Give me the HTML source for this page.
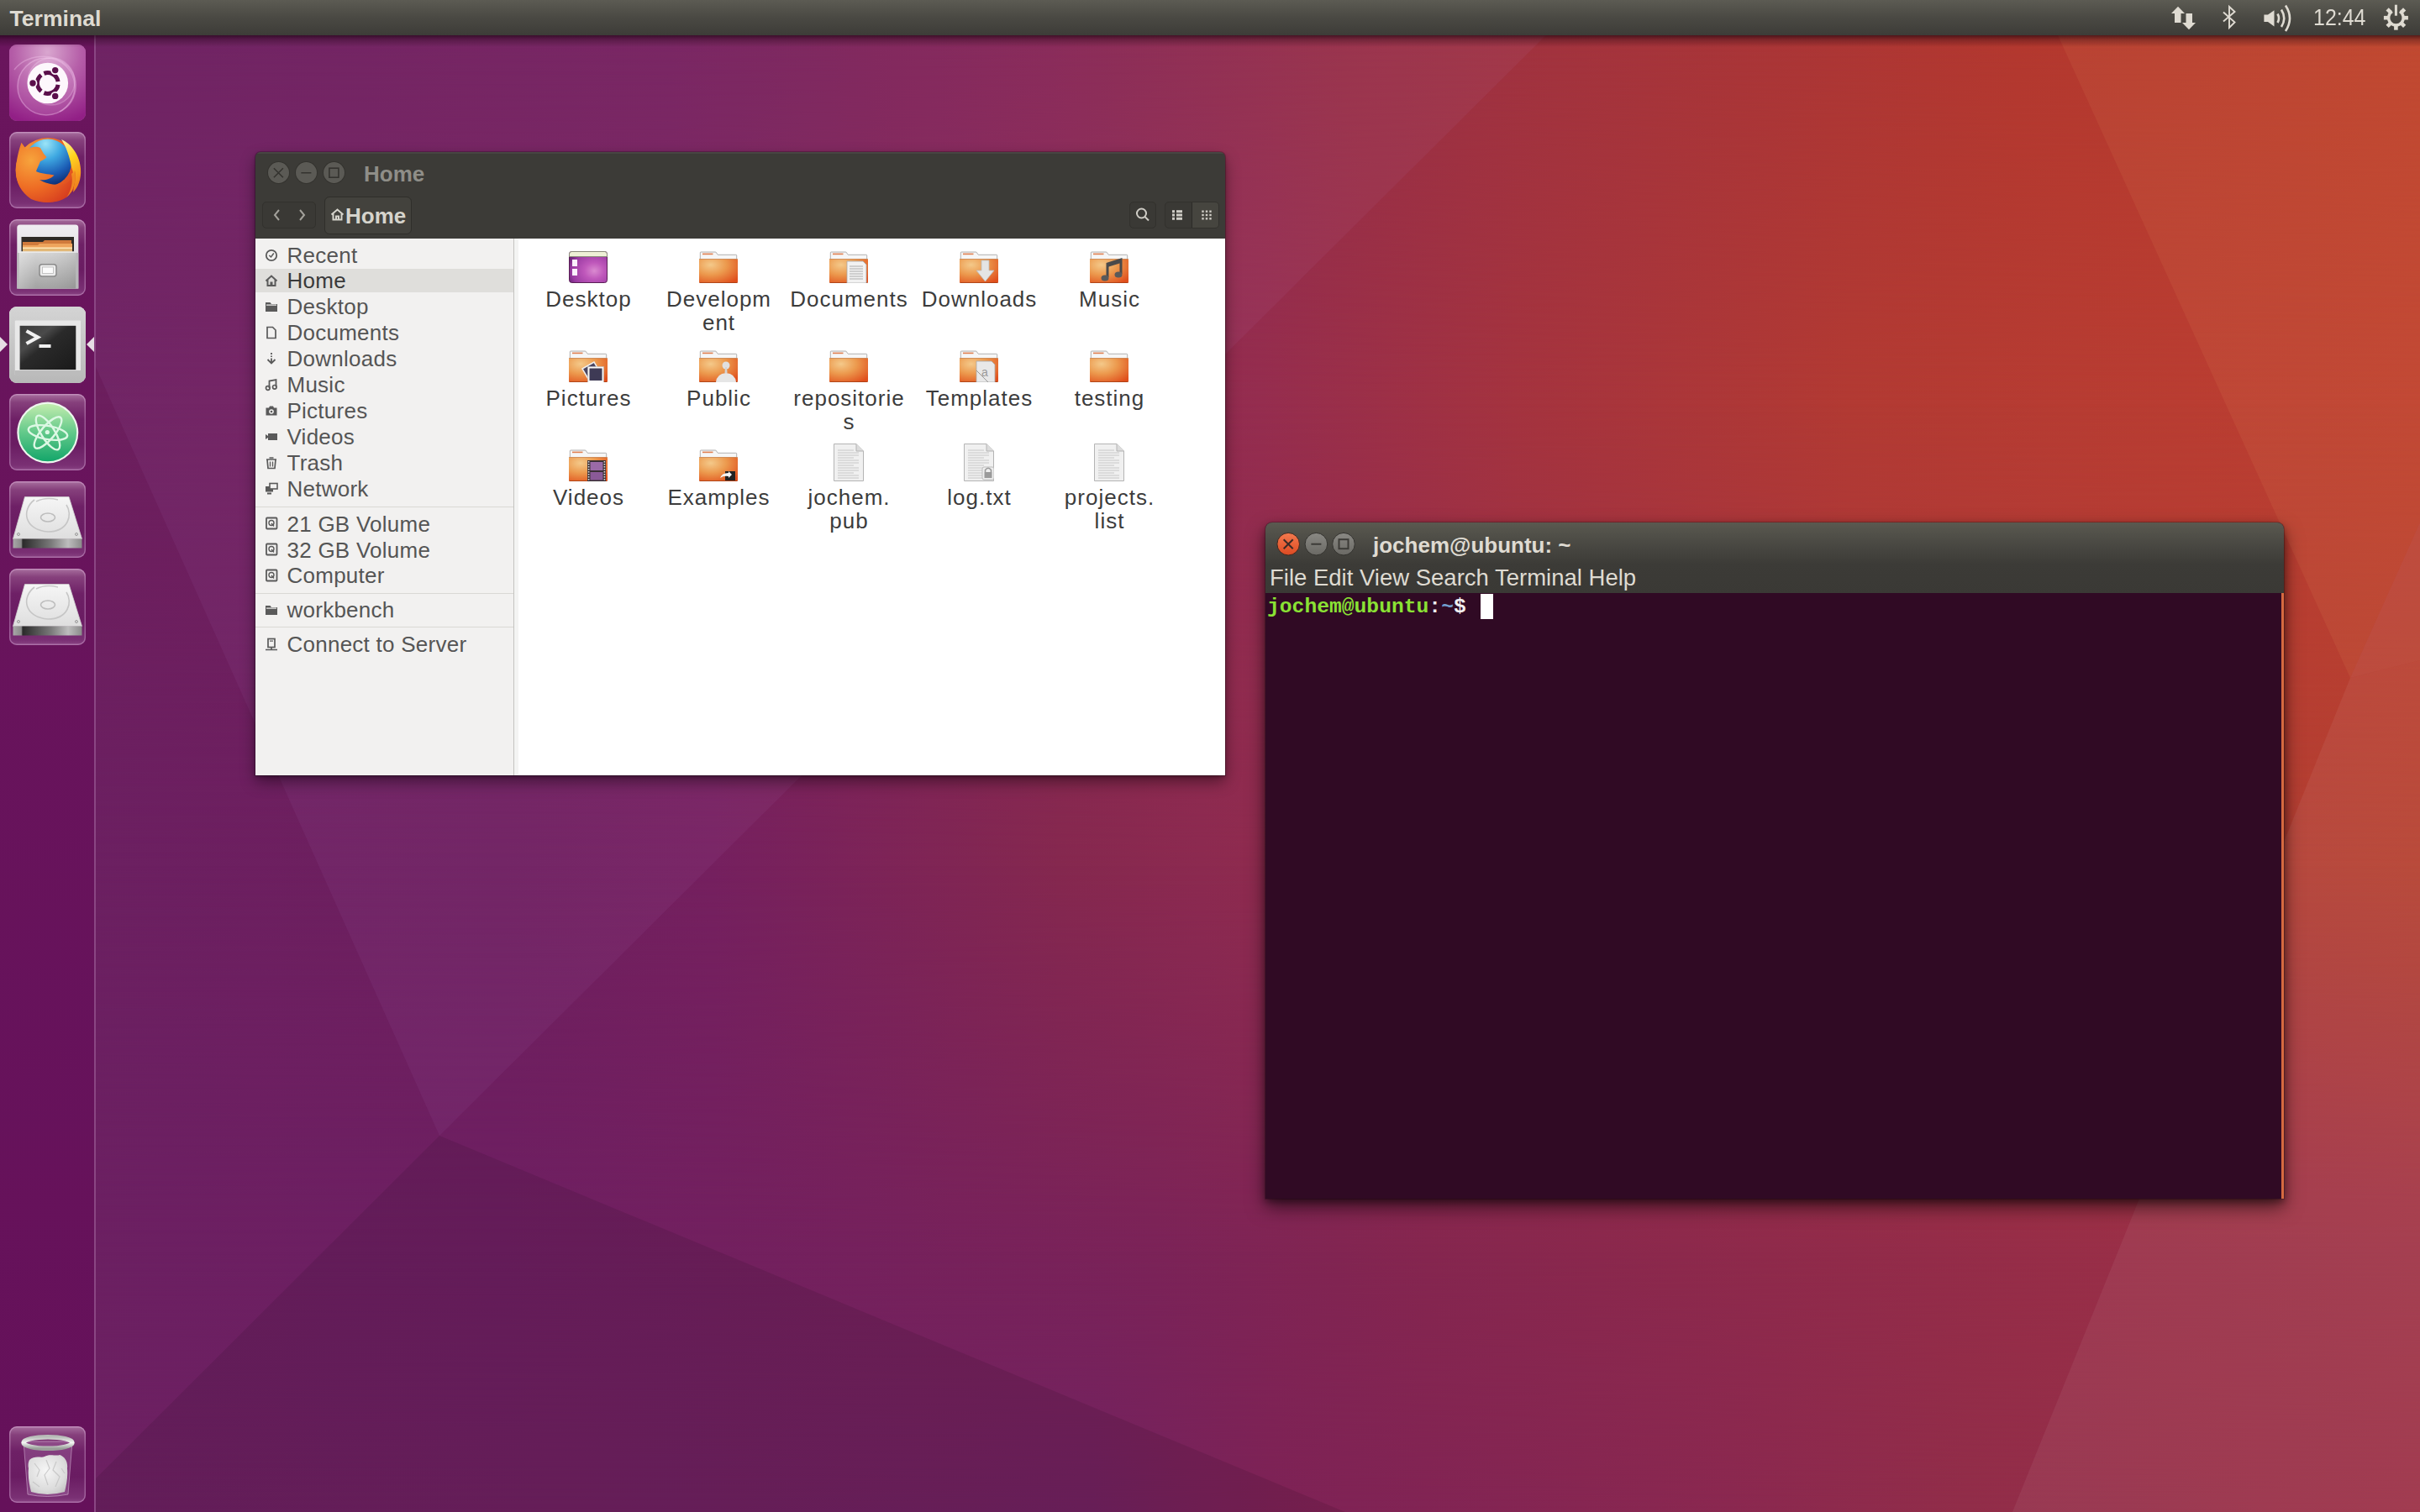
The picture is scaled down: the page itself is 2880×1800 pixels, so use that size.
<!DOCTYPE html>
<html><head><meta charset="utf-8"><style>
*{box-sizing:border-box;margin:0;padding:0}
html,body{width:2880px;height:1800px;overflow:hidden;background:#7a2360}
body{position:relative;font-family:"Liberation Sans",sans-serif}
.abs{position:absolute}
.t{position:absolute;line-height:1;white-space:pre}
#wall{position:absolute;left:0;top:0}
#panel{position:absolute;left:0;top:0;width:2880px;height:42px;background:linear-gradient(#5c5b53,#4a4943 50%,#3d3c38);z-index:10}
#panelshadow{position:absolute;left:0;top:42px;width:2880px;height:14px;background:linear-gradient(rgba(20,0,10,.62),rgba(20,0,10,.3) 35%,rgba(0,0,0,0));z-index:9}
#launcher{position:absolute;left:0;top:42px;width:114px;height:1758px;background:linear-gradient(#6a155d,#65115a);z-index:8;border-right:2px solid #8a4683}
.tile{position:absolute;left:11px;width:91px;height:91px;border-radius:9px;overflow:hidden}
.tile.gray{background:linear-gradient(#d6d6d6,#b9b9b9);box-shadow:inset 0 0 0 1.5px rgba(255,230,255,.5)}
.tile.purple{background:linear-gradient(#a8709f 0px,#86407c 10px,#6e2066 30px,#6a1c62 60px,#7a3074 85px,#8a4484);box-shadow:inset 0 0 0 1.5px rgba(255,220,255,.3)}
.tile.plain{box-shadow:inset 0 0 0 1.5px rgba(255,220,255,.35)}
.tile>svg{position:absolute;left:0;top:0}
.win{position:absolute}
</style></head>
<body>
<svg id="wall" width="2880" height="1800" viewBox="0 0 2880 1800"><defs><linearGradient id="r0" gradientUnits="userSpaceOnUse" x1="0" y1="0" x2="2880" y2="0"><stop offset="0.0000" stop-color="#681c5c"/><stop offset="0.2778" stop-color="#75205c"/><stop offset="0.4340" stop-color="#862652"/><stop offset="0.5556" stop-color="#972f45"/><stop offset="0.6424" stop-color="#a2333e"/><stop offset="0.8333" stop-color="#b3382f"/><stop offset="1.0000" stop-color="#bc3f2c"/></linearGradient><linearGradient id="r1" gradientUnits="userSpaceOnUse" x1="0" y1="0" x2="2880" y2="0"><stop offset="0.0000" stop-color="#6a1e5e"/><stop offset="0.2778" stop-color="#77215c"/><stop offset="0.5208" stop-color="#952d4f"/><stop offset="0.6250" stop-color="#a4333f"/><stop offset="0.7639" stop-color="#b23a33"/><stop offset="0.9028" stop-color="#b93d32"/><stop offset="1.0000" stop-color="#bd3f30"/></linearGradient><linearGradient id="m1" gradientUnits="userSpaceOnUse" x1="0" y1="42" x2="0" y2="480"><stop offset="0" stop-color="#fff" stop-opacity="0"/><stop offset="1" stop-color="#fff" stop-opacity="1"/></linearGradient><mask id="k1" maskUnits="userSpaceOnUse" x="0" y="0" width="2880" height="1800"><rect width="2880" height="1800" fill="url(#m1)"/></mask><linearGradient id="r2" gradientUnits="userSpaceOnUse" x1="0" y1="0" x2="2880" y2="0"><stop offset="0.0000" stop-color="#6b2062"/><stop offset="0.2083" stop-color="#6e1f5e"/><stop offset="0.2951" stop-color="#75205f"/><stop offset="0.4375" stop-color="#85284f"/><stop offset="0.4965" stop-color="#8c2a50"/><stop offset="0.6597" stop-color="#9e3146"/><stop offset="0.8333" stop-color="#ae3a3a"/><stop offset="1.0000" stop-color="#b5402f"/></linearGradient><linearGradient id="m2" gradientUnits="userSpaceOnUse" x1="0" y1="480" x2="0" y2="1030"><stop offset="0" stop-color="#fff" stop-opacity="0"/><stop offset="1" stop-color="#fff" stop-opacity="1"/></linearGradient><mask id="k2" maskUnits="userSpaceOnUse" x="0" y="0" width="2880" height="1800"><rect width="2880" height="1800" fill="url(#m2)"/></mask><linearGradient id="r3" gradientUnits="userSpaceOnUse" x1="0" y1="0" x2="2880" y2="0"><stop offset="0.0000" stop-color="#6b2062"/><stop offset="0.2083" stop-color="#6e1f62"/><stop offset="0.2951" stop-color="#72205f"/><stop offset="0.4771" stop-color="#7b2358"/><stop offset="0.5903" stop-color="#85264f"/><stop offset="0.8333" stop-color="#962d48"/><stop offset="1.0000" stop-color="#a03447"/></linearGradient><linearGradient id="m3" gradientUnits="userSpaceOnUse" x1="0" y1="1030" x2="0" y2="1490"><stop offset="0" stop-color="#fff" stop-opacity="0"/><stop offset="1" stop-color="#fff" stop-opacity="1"/></linearGradient><mask id="k3" maskUnits="userSpaceOnUse" x="0" y="0" width="2880" height="1800"><rect width="2880" height="1800" fill="url(#m3)"/></mask><linearGradient id="r4" gradientUnits="userSpaceOnUse" x1="0" y1="0" x2="2880" y2="0"><stop offset="0.0000" stop-color="#6c2062"/><stop offset="0.4514" stop-color="#722260"/><stop offset="0.5253" stop-color="#7d2256"/><stop offset="0.7153" stop-color="#8a2850"/><stop offset="0.8125" stop-color="#912d49"/><stop offset="1.0000" stop-color="#9c3047"/></linearGradient><linearGradient id="m4" gradientUnits="userSpaceOnUse" x1="0" y1="1490" x2="0" y2="1800"><stop offset="0" stop-color="#fff" stop-opacity="0"/><stop offset="1" stop-color="#fff" stop-opacity="1"/></linearGradient><mask id="k4" maskUnits="userSpaceOnUse" x="0" y="0" width="2880" height="1800"><rect width="2880" height="1800" fill="url(#m4)"/></mask></defs><rect width="2880" height="1800" fill="url(#r0)"/><rect width="2880" height="1800" fill="url(#r1)" mask="url(#k1)"/><rect width="2880" height="1800" fill="url(#r2)" mask="url(#k2)"/><rect width="2880" height="1800" fill="url(#r3)" mask="url(#k3)"/><rect width="2880" height="1800" fill="url(#r4)" mask="url(#k4)"/><polygon points="0,0 1882,0 523,1352 0,182" fill="#d2a0e6" fill-opacity="0.06"/><polygon points="523,1352 74,1800 1601,1800" fill="#000" fill-opacity="0.09"/><polygon points="2430,0 2880,0 2880,622 2797,807" fill="#ffc078" fill-opacity="0.08"/><polygon points="2797,807 2880,622 2880,786" fill="#fff" fill-opacity="0.07"/><polygon points="2797,807 2880,786 2880,1800 2395,1800" fill="#fff" fill-opacity="0.06"/></svg>
<div id="panel"><div class="t" style="left:11.5px;top:8.5px;font-size:26.6px;color:#dfdbd2;font-weight:bold;font-family:'Liberation Sans',sans-serif;">Terminal</div><div class="t" style="left:2752.5px;top:8.1px;font-size:27px;color:#dfdbd2;font-weight:normal;font-family:'Liberation Sans',sans-serif;transform:scaleX(0.925);transform-origin:0 0">12:44</div><svg class="abs" style="left:2580px;top:4px" width="300" height="36">
<g fill="#dfdbd2">
<path d="M12 3.7 L4 12 H8 V23 H15.5 V12 H20 Z"/>
<path d="M25 31.2 L33 23 H29 V12 H21.5 V23 H17 Z"/>
</g>
<path d="M66 10.5 L79.5 22.5 L73 29 V4 L79.5 10 L66 21.5" fill="none" stroke="#dfdbd2" stroke-width="1.9" stroke-linejoin="miter"/>
<path d="M114.4 13.5 H119 L126.5 8.2 V27.4 L119 22 H114.4 Z" fill="#dfdbd2"/>
<path d="M130.5 12.5 Q133.5 17.8 130.5 23" fill="none" stroke="#dfdbd2" stroke-width="2.6"/>
<path d="M135 7.5 Q141.5 17.8 135 28" fill="none" stroke="#dfdbd2" stroke-width="2.6"/>
<path d="M140 2.5 Q150 17.8 140 33" fill="none" stroke="#dfdbd2" stroke-width="2.6"/>
<g transform="translate(271.4 17.2)" fill="#dfdbd2">
<path d="M-4.5 -7.6 A 8.8 8.8 0 1 0 4.5 -7.6" fill="none" stroke="#dfdbd2" stroke-width="3.4"/>
<rect x="-2.3" y="-14.5" width="4.6" height="5" transform="rotate(45)"/><rect x="-2.3" y="-14.5" width="4.6" height="5" transform="rotate(90)"/><rect x="-2.3" y="-14.5" width="4.6" height="5" transform="rotate(135)"/><rect x="-2.3" y="-14.5" width="4.6" height="5" transform="rotate(180)"/><rect x="-2.3" y="-14.5" width="4.6" height="5" transform="rotate(225)"/><rect x="-2.3" y="-14.5" width="4.6" height="5" transform="rotate(270)"/><rect x="-2.3" y="-14.5" width="4.6" height="5" transform="rotate(315)"/>
<rect x="-1.5" y="-15.5" width="3" height="13"/>
</g>
</svg></div>
<div id="panelshadow"></div>
<div id="launcher">
<div class="tile plain" style="top:11px;"><svg width="91" height="91" viewBox="0 0 91 91">
<defs><radialGradient id="ubg" cx="0.5" cy="0.1" r="0.95"><stop offset="0" stop-color="#d9a6cf"/><stop offset="0.45" stop-color="#b660a9"/><stop offset="1" stop-color="#921f86"/></radialGradient></defs>
<rect width="91" height="91" fill="url(#ubg)"/>
<circle cx="44" cy="50" r="34" fill="rgba(255,220,250,.12)" stroke="rgba(255,215,250,.35)" stroke-width="1.6"/><circle cx="50" cy="44" r="28" fill="rgba(255,230,255,.10)" stroke="rgba(255,225,250,.25)" stroke-width="1.4"/>
<path d="M6 30 C 20 12 52 8 70 26 C 86 44 80 70 60 80" fill="none" stroke="rgba(255,215,250,.3)" stroke-width="1.6"/>
<circle cx="45.8" cy="46" r="24.3" fill="#fdf7fc"/>
<g fill="none" stroke="#5b0f4b" stroke-width="5"><path d="M58.05 47.94 A12.4 12.4 0 0 1 41.36 57.58"/><path d="M38.00 55.64 A12.4 12.4 0 0 1 38.00 36.36"/><path d="M41.36 34.42 A12.4 12.4 0 0 1 58.05 44.06"/></g>
<g fill="#fdf7fc"><circle cx="54.70" cy="61.42" r="5.4"/><circle cx="28.00" cy="46.00" r="5.4"/><circle cx="54.70" cy="30.58" r="5.4"/></g><g fill="#5b0f4b"><circle cx="54.70" cy="61.42" r="3.7"/><circle cx="28.00" cy="46.00" r="3.7"/><circle cx="54.70" cy="30.58" r="3.7"/></g>
</svg></div>
<div class="tile purple" style="top:115px;"><svg width="91" height="91" viewBox="0 0 91 91">
<defs>
<radialGradient id="ffg" cx="0.45" cy="0.1" r="0.95"><stop offset="0" stop-color="#9be4f7"/><stop offset="0.35" stop-color="#3fa9e2"/><stop offset="0.7" stop-color="#1b5cb4"/><stop offset="1" stop-color="#0b2466"/></radialGradient>
<radialGradient id="ffo" cx="0.25" cy="0.3" r="0.85"><stop offset="0" stop-color="#f7a43c"/><stop offset="0.55" stop-color="#ee6c24"/><stop offset="1" stop-color="#d63d1f"/></radialGradient>
<linearGradient id="ffy" x1="0" y1="0" x2="0.3" y2="1"><stop offset="0" stop-color="#fff6b0"/><stop offset="0.45" stop-color="#ffd51f"/><stop offset="1" stop-color="#f2861e"/></linearGradient>
</defs>
<circle cx="46" cy="45.5" r="38.5" fill="url(#ffo)"/><circle cx="46" cy="36.5" r="28" fill="url(#ffg)"/>
<path d="M62 9 C 74 14 84 28 85 44 C 86 56 82 66 76 72 C 78 62 78 52 74 42 C 72 30 68 18 62 9 Z" fill="url(#ffy)"/>
<path d="M14.5 12.7 C 17 16 19 19 21 21 C 27 17 33 17 37 19 L 41 26 L 44.5 30 C 42 33 39 34 37 35 C 35 40 33 44 32 47 C 38 50 46 50 53.5 51.5 C 50 56 42 58 36 57 C 44 62 56 64 66 62 C 72 60 76 54 78 46 C 80 56 78 70 68 78 C 58 85 40 86 26 80 C 14 72 8 60 8 48 C 8 32 12 20 14.5 12.7 Z" fill="url(#ffo)"/>
<path d="M78 46 C 80 56 78 70 68 78 C 74 70 76 60 74 50 Z" fill="#f59a22" opacity=".8"/>
</svg></div>
<div class="tile purple" style="top:219px;"><svg width="91" height="91" viewBox="0 0 91 91">
<defs>
<linearGradient id="fcab" x1="0" y1="0" x2="0" y2="1"><stop offset="0" stop-color="#f0eef2"/><stop offset="1" stop-color="#cfcfd3"/></linearGradient>
<linearGradient id="fdr" x1="0" y1="0" x2="0" y2="1"><stop offset="0" stop-color="#d6d6d6"/><stop offset="1" stop-color="#a2a2a2"/></linearGradient>
<linearGradient id="fdrh" x1="0" y1="0" x2="1" y2="0"><stop offset="0" stop-color="#fff" stop-opacity=".25"/><stop offset=".3" stop-color="#fff" stop-opacity="0"/><stop offset="1" stop-color="#000" stop-opacity=".08"/></linearGradient>
</defs>
<path d="M9.3 82.6 V10 Q9.3 6.5 12.8 6.5 H78.8 Q82.3 6.5 82.3 10 V82.6 Z" fill="url(#fcab)"/>
<rect x="9.3" y="40" width="73" height="42.6" fill="#b9b9bb"/>
<rect x="14.5" y="21" width="62.5" height="18" fill="#2e2a26"/>
<path d="M16 39 V27 H40 L42 25 H74 V39 Z" fill="#d07a3c"/>
<path d="M16 39 V31 H34 L36 29 H75 V39 Z" fill="#eea45c"/>
<rect x="16" y="33.5" width="59" height="1.5" fill="#ffe8b8"/>
<rect x="16" y="35" width="59" height="4" fill="#e2b878"/>
<rect x="11.7" y="38.5" width="67.5" height="44.1" rx="1" fill="url(#fdr)"/>
<rect x="11.7" y="38.5" width="67.5" height="44.1" rx="1" fill="url(#fdrh)"/>
<rect x="11.7" y="38.5" width="67.5" height="1.2" fill="#f2f2f2"/>
<rect x="36" y="53.7" width="20" height="14.3" rx="3" fill="#ececec" stroke="#8a8a8a" stroke-width="1.5"/>
<rect x="39.5" y="57" width="13" height="7.5" fill="#fbfbfb" stroke="#b8b8b8" stroke-width=".8"/>
</svg></div>
<div class="tile gray" style="top:323px;"><svg width="91" height="91" viewBox="0 0 91 91">
<defs><linearGradient id="tscr" x1="0" y1="0" x2="1" y2="1"><stop offset="0" stop-color="#3a3a3a"/><stop offset="0.3" stop-color="#4a4a4a"/><stop offset="0.45" stop-color="#2a2a2a"/><stop offset="1" stop-color="#1a1a1a"/></linearGradient>
<linearGradient id="tbg" x1="0" y1="0" x2="0" y2="1"><stop offset="0" stop-color="#d4d4d4"/><stop offset="1" stop-color="#b8b8b8"/></linearGradient></defs>
<rect x="0" y="0" width="91" height="91" fill="url(#tbg)"/>
<rect x="6.8" y="16.5" width="78.2" height="65.5" rx="1" fill="#e8e8e8"/>
<rect x="6.8" y="76" width="78.2" height="6" fill="#bcbcbc"/>
<rect x="12.6" y="22.8" width="66.7" height="52.3" fill="url(#tscr)"/>
<path d="M20.5 29 L34 36.5 L20.5 44" fill="none" stroke="#f0f0f0" stroke-width="4.2"/>
<rect x="35.5" y="45" width="14" height="4" fill="#f0f0f0"/>
</svg></div>
<div class="tile purple" style="top:427px;"><svg width="91" height="91" viewBox="0 0 91 91">
<defs><linearGradient id="atg" x1="0" y1="0" x2="0" y2="1"><stop offset="0" stop-color="#c2ecae"/><stop offset="0.5" stop-color="#62c98a"/><stop offset="1" stop-color="#14a66a"/></linearGradient></defs>
<circle cx="45.8" cy="46" r="36.5" fill="#eef6ee"/>
<circle cx="45.8" cy="46" r="34.3" fill="url(#atg)"/>
<g fill="none" stroke="#dcf8e4" stroke-width="2.4">
<ellipse cx="46" cy="46" rx="23.5" ry="8" transform="rotate(10 46 46)"/>
<ellipse cx="46" cy="46" rx="23.5" ry="8" transform="rotate(58 46 46)"/>
<ellipse cx="46" cy="46" rx="23.5" ry="8" transform="rotate(-50 46 46)"/>
</g>
<circle cx="45.3" cy="45.5" r="2.6" fill="#dcf8e4"/>
</svg></div>
<div class="tile purple" style="top:531px;"><svg width="91" height="91" viewBox="0 0 91 91">
<defs><linearGradient id="dtop" x1="0" y1="0" x2="0" y2="1"><stop offset="0" stop-color="#f6f6f6"/><stop offset="1" stop-color="#dedede"/></linearGradient>
<linearGradient id="dside" x1="0" y1="0" x2="1" y2="0"><stop offset="0" stop-color="#a8a8a8"/><stop offset="0.12" stop-color="#8a8a8a"/><stop offset="0.14" stop-color="#2a2a2a"/><stop offset="0.55" stop-color="#7a7a7a"/><stop offset="0.8" stop-color="#bdbdbd"/><stop offset="1" stop-color="#8a8a8a"/></linearGradient></defs>
<path d="M18.5 18.5 L71 18.5 L86.5 68.5 L4.5 68.5 Z" fill="url(#dtop)" stroke="#cfcfcf" stroke-width=".8"/>
<rect x="4.5" y="68.5" width="82" height="11" fill="url(#dside)"/>
<path d="M30 22 C 14 34 18 58 46 60 C 70 60 76 40 68 28" fill="none" stroke="#c6c6c6" stroke-width="1.6"/>
<path d="M32 24 C 40 20 50 20 58 22" fill="none" stroke="#cacaca" stroke-width="1.4"/>
<ellipse cx="46" cy="43" rx="8.5" ry="5" fill="none" stroke="#bdbdbd" stroke-width="1.6"/>
<circle cx="11" cy="63" r="1.5" fill="none" stroke="#888" stroke-width=".8"/><circle cx="80" cy="63" r="1.5" fill="none" stroke="#888" stroke-width=".8"/>
</svg></div>
<div class="tile purple" style="top:635px;"><svg width="91" height="91" viewBox="0 0 91 91">
<defs><linearGradient id="dtop" x1="0" y1="0" x2="0" y2="1"><stop offset="0" stop-color="#f6f6f6"/><stop offset="1" stop-color="#dedede"/></linearGradient>
<linearGradient id="dside" x1="0" y1="0" x2="1" y2="0"><stop offset="0" stop-color="#a8a8a8"/><stop offset="0.12" stop-color="#8a8a8a"/><stop offset="0.14" stop-color="#2a2a2a"/><stop offset="0.55" stop-color="#7a7a7a"/><stop offset="0.8" stop-color="#bdbdbd"/><stop offset="1" stop-color="#8a8a8a"/></linearGradient></defs>
<path d="M18.5 18.5 L71 18.5 L86.5 68.5 L4.5 68.5 Z" fill="url(#dtop)" stroke="#cfcfcf" stroke-width=".8"/>
<rect x="4.5" y="68.5" width="82" height="11" fill="url(#dside)"/>
<path d="M30 22 C 14 34 18 58 46 60 C 70 60 76 40 68 28" fill="none" stroke="#c6c6c6" stroke-width="1.6"/>
<path d="M32 24 C 40 20 50 20 58 22" fill="none" stroke="#cacaca" stroke-width="1.4"/>
<ellipse cx="46" cy="43" rx="8.5" ry="5" fill="none" stroke="#bdbdbd" stroke-width="1.6"/>
<circle cx="11" cy="63" r="1.5" fill="none" stroke="#888" stroke-width=".8"/><circle cx="80" cy="63" r="1.5" fill="none" stroke="#888" stroke-width=".8"/>
</svg></div>
<div class="tile purple" style="top:1656px;"><svg width="91" height="91" viewBox="0 0 91 91">
<defs><linearGradient id="trim" x1="0" y1="0" x2="0" y2="1"><stop offset="0" stop-color="#b8bcb8"/><stop offset="0.5" stop-color="#f4f6f4"/><stop offset="1" stop-color="#9aa09a"/></linearGradient>
<radialGradient id="tpap" cx="0.45" cy="0.4" r="0.7"><stop offset="0" stop-color="#f6f6f6"/><stop offset="0.7" stop-color="#dcdcdc"/><stop offset="1" stop-color="#c4c4c4"/></radialGradient></defs>
<path d="M17 18 L75 18 L70 81 Q45 86 22 81 Z" fill="rgba(200,150,205,.25)" stroke="rgba(235,210,235,.45)" stroke-width="1"/>
<path d="M24 40 C 30 34 38 38 42 36 C 48 32 56 36 60 34 C 66 36 70 42 69 50 C 70 60 68 70 66 78 Q 45 84 26 78 C 24 70 22 60 23 50 C 22 46 23 42 24 40 Z" fill="url(#tpap)"/>
<g fill="none" stroke="#c2c2c2" stroke-width="1.2" opacity=".8">
<path d="M30 44 L36 52 L33 60 M44 40 L48 50 L42 58 L46 70 M56 42 L52 52 L60 60 L55 72 M28 66 L36 72 M62 50 L66 56"/>
</g>
<ellipse cx="46" cy="19.5" rx="29" ry="6.8" fill="none" stroke="url(#trim)" stroke-width="5.5"/>
</svg></div>
<div class="abs" style="left:0;top:359px;width:0;height:0;border-top:9px solid transparent;border-bottom:9px solid transparent;border-left:9px solid #e6dde4"></div>
<div class="abs" style="left:103px;top:359px;width:0;height:0;border-top:9px solid transparent;border-bottom:9px solid transparent;border-right:9px solid #e6dde4"></div>
</div>
<div class="win" id="naut" style="left:304px;top:181px;width:1154px;height:742px;border-radius:6px 6px 0 0;background:#3c3b37;box-shadow:0 8px 18px rgba(0,0,0,.42),0 2px 4px rgba(0,0,0,.25),0 0 0 1px rgba(0,0,0,.2);overflow:hidden;z-index:5"><div class="abs" style="left:0;top:0;width:100%;height:2px;background:rgba(255,255,255,.06)"></div><div class="abs" style="left:14.899999999999977px;top:12.199999999999989px;width:25px;height:25px;border-radius:50%;background:#5b5a55;box-shadow:0 0 0 1px #34332f"></div><div class="abs" style="left:47.89999999999998px;top:12.199999999999989px;width:25px;height:25px;border-radius:50%;background:#5b5a55;box-shadow:0 0 0 1px #34332f"></div><div class="abs" style="left:80.89999999999998px;top:12.199999999999989px;width:25px;height:25px;border-radius:50%;background:#5b5a55;box-shadow:0 0 0 1px #34332f"></div><svg class="abs" style="left:0;top:0" width="1154" height="110">
<g stroke="#34332f" stroke-width="1.6" fill="none">
<path d="M21.899999999999977 19.19999999999999 l11 11 M32.89999999999998 19.19999999999999 l-11 11"/>
<path d="M54.39999999999998 24.69999999999999 h12"/>
<rect x="87.89999999999998" y="19.19999999999999" width="11" height="11"/>
</g></svg><div class="t" style="left:129px;top:13.0px;font-size:26px;color:#8f8e88;font-weight:bold;font-family:'Liberation Sans',sans-serif;">Home</div><div class="abs" style="left:8px;top:59px;width:64px;height:32px;border-radius:5px;border:1px solid #32312d;background:#3a3935"></div><svg class="abs" style="left:0;top:0" width="1154" height="110"><g stroke="#a3a19b" stroke-width="2" fill="none">
<path d="M28 69 l-5 6 l5 6"/><path d="M53 69 l5 6 l-5 6"/></g></svg><div class="abs" style="left:82px;top:53px;width:104px;height:45px;border-radius:6px;border:1px solid #2f2e2a;background:#43423d"></div><svg class="abs" style="left:89px;top:67px" width="17" height="15"><path d="M1.5 7.5 L8.5 1.5 L15.5 7.5 M3.5 6 V13.5 H13.5 V6 M7 13.5 V9.5 H10 V13.5" fill="none" stroke="#d6d4cc" stroke-width="2"/></svg><div class="t" style="left:107px;top:63.0px;font-size:26px;color:#d6d4cc;font-weight:bold;font-family:'Liberation Sans',sans-serif;">Home</div><div class="abs" style="left:1040px;top:59px;width:32px;height:32px;border-radius:5px;border:1px solid #32312d;background:#3a3935"></div><div class="abs" style="left:1082px;top:59px;width:65px;height:32px;border-radius:5px;border:1px solid #32312d;background:#3a3935;overflow:hidden"><div class="abs" style="left:31px;top:0;width:34px;height:32px;background:#46453f;border-left:1px solid #2c2b28"></div></div><svg class="abs" style="left:0;top:0" width="1154" height="110"><g fill="none" stroke="#cfcdc6" stroke-width="2">
<circle cx="1054.5" cy="73" r="5.5"/><path d="M1058.5 77 l4.5 4.5"/></g>
<g fill="#cfcdc6"><rect x="1091" y="69.19999999999999" width="3" height="3"/><rect x="1096" y="69.19999999999999" width="7" height="3"/><rect x="1091" y="73.5" width="3" height="3"/><rect x="1096" y="73.5" width="7" height="3"/><rect x="1091" y="77.80000000000001" width="3" height="3"/><rect x="1096" y="77.80000000000001" width="7" height="3"/><rect x="1126.3" y="69.5" width="2.4" height="2.4"/><rect x="1126.3" y="73.80000000000001" width="2.4" height="2.4"/><rect x="1126.3" y="78.10000000000002" width="2.4" height="2.4"/><rect x="1130.8" y="69.5" width="2.4" height="2.4"/><rect x="1130.8" y="73.80000000000001" width="2.4" height="2.4"/><rect x="1130.8" y="78.10000000000002" width="2.4" height="2.4"/><rect x="1135.3" y="69.5" width="2.4" height="2.4"/><rect x="1135.3" y="73.80000000000001" width="2.4" height="2.4"/><rect x="1135.3" y="78.10000000000002" width="2.4" height="2.4"/></g></svg><div class="abs" style="left:0;top:103px;width:307px;height:639px;background:#f2f1f0"></div><div class="abs" style="left:307px;top:103px;width:1px;height:639px;background:#c4c3c0"></div><div class="abs" style="left:308px;top:103px;width:846px;height:639px;background:#ffffff"></div><div class="abs" style="left:308px;top:103px;width:5px;height:639px;background:#f4f4f3"></div><div class="abs" style="left:0;top:139px;width:307px;height:28px;background:#dfdedb"></div><div class="abs" style="left:0;top:422px;width:307px;height:1px;background:#d9d8d5"></div><div class="abs" style="left:0;top:525px;width:307px;height:1px;background:#d9d8d5"></div><div class="abs" style="left:0;top:565px;width:307px;height:1px;background:#d9d8d5"></div><svg class="abs" style="left:11px;top:114.5px" width="16" height="16" viewBox="0 0 16 16"><circle cx="8" cy="8" r="6.2" fill="none" stroke="#5a5a5a" stroke-width="1.8"/><path d="M5.3 8 L7.5 10 L10.8 5.5" fill="none" stroke="#5a5a5a" stroke-width="1.5"/></svg><div class="t" style="left:37.5px;top:110.0px;font-size:26px;color:#555555;font-weight:normal;font-family:'Liberation Sans',sans-serif;letter-spacing:0.25px">Recent</div><svg class="abs" style="left:11px;top:144.5px" width="16" height="16" viewBox="0 0 16 16"><path d="M1.5 8.5 L8 2.5 L14.5 8.5 M3.5 7 V14 H12.5 V7" fill="none" stroke="#5a5a5a" stroke-width="2"/><rect x="6.5" y="9.5" width="3" height="4.5" fill="#5a5a5a"/></svg><div class="t" style="left:37.5px;top:140.0px;font-size:26px;color:#3a3a3a;font-weight:normal;font-family:'Liberation Sans',sans-serif;letter-spacing:0.25px">Home</div><svg class="abs" style="left:11px;top:175.5px" width="16" height="16" viewBox="0 0 16 16"><path d="M1 3 H6.5 L8 5 H15 V14 H1 Z" fill="#5a5a5a"/><rect x="2" y="5.5" width="12" height="1.2" fill="#f2f1f0"/></svg><div class="t" style="left:37.5px;top:171.0px;font-size:26px;color:#555555;font-weight:normal;font-family:'Liberation Sans',sans-serif;letter-spacing:0.25px">Desktop</div><svg class="abs" style="left:11px;top:206.5px" width="16" height="16" viewBox="0 0 16 16"><path d="M3 1.5 H9.5 L13 5 V14.5 H3 Z" fill="none" stroke="#5a5a5a" stroke-width="1.7"/></svg><div class="t" style="left:37.5px;top:202.0px;font-size:26px;color:#555555;font-weight:normal;font-family:'Liberation Sans',sans-serif;letter-spacing:0.25px">Documents</div><svg class="abs" style="left:11px;top:237.5px" width="16" height="16" viewBox="0 0 16 16"><path d="M8 1 V3 M8 4.5 V6 M8 7.5 V13 M3.5 9 L8 13.5 L12.5 9" fill="none" stroke="#5a5a5a" stroke-width="1.8"/></svg><div class="t" style="left:37.5px;top:233.0px;font-size:26px;color:#555555;font-weight:normal;font-family:'Liberation Sans',sans-serif;letter-spacing:0.25px">Downloads</div><svg class="abs" style="left:11px;top:268.5px" width="16" height="16" viewBox="0 0 16 16"><path d="M5.5 12 V3.5 L13.5 2 V10.5" fill="none" stroke="#5a5a5a" stroke-width="1.8"/><circle cx="3.8" cy="12" r="2.3" fill="none" stroke="#5a5a5a" stroke-width="1.7"/><circle cx="11.8" cy="10.8" r="2.3" fill="none" stroke="#5a5a5a" stroke-width="1.7"/></svg><div class="t" style="left:37.5px;top:264.0px;font-size:26px;color:#555555;font-weight:normal;font-family:'Liberation Sans',sans-serif;letter-spacing:0.25px">Music</div><svg class="abs" style="left:11px;top:299.5px" width="16" height="16" viewBox="0 0 16 16"><path d="M1.5 4.5 H5 L6 2.5 H10 L11 4.5 H14.5 V13.5 H1.5 Z" fill="#5a5a5a"/><circle cx="8" cy="9" r="2.8" fill="#f2f1f0"/><circle cx="8" cy="9" r="1.3" fill="#5a5a5a"/></svg><div class="t" style="left:37.5px;top:295.0px;font-size:26px;color:#555555;font-weight:normal;font-family:'Liberation Sans',sans-serif;letter-spacing:0.25px">Pictures</div><svg class="abs" style="left:11px;top:330.5px" width="16" height="16" viewBox="0 0 16 16"><rect x="4" y="4" width="11" height="8" fill="#5a5a5a"/><path d="M1 5 L4 7 V9 L1 11 Z" fill="#5a5a5a"/></svg><div class="t" style="left:37.5px;top:326.0px;font-size:26px;color:#555555;font-weight:normal;font-family:'Liberation Sans',sans-serif;letter-spacing:0.25px">Videos</div><svg class="abs" style="left:11px;top:361.5px" width="16" height="16" viewBox="0 0 16 16"><path d="M2 4 H14 M3 4 L4 14.5 H12 L13 4 M5.5 2 H10.5" fill="none" stroke="#5a5a5a" stroke-width="1.7"/><path d="M6.5 6.5 V12.5 M9.5 6.5 V12.5" stroke="#5a5a5a" stroke-width="1.3"/></svg><div class="t" style="left:37.5px;top:357.0px;font-size:26px;color:#555555;font-weight:normal;font-family:'Liberation Sans',sans-serif;letter-spacing:0.25px">Trash</div><svg class="abs" style="left:11px;top:392.5px" width="16" height="16" viewBox="0 0 16 16"><rect x="1" y="5" width="9" height="6.5" fill="#5a5a5a"/><rect x="6" y="1.5" width="9" height="6.5" fill="#f2f1f0" stroke="#5a5a5a" stroke-width="1.6"/><rect x="3" y="12.5" width="5" height="2" fill="#5a5a5a"/></svg><div class="t" style="left:37.5px;top:388.0px;font-size:26px;color:#555555;font-weight:normal;font-family:'Liberation Sans',sans-serif;letter-spacing:0.25px">Network</div><svg class="abs" style="left:11px;top:434.0px" width="16" height="16" viewBox="0 0 16 16"><rect x="2" y="1.5" width="12.5" height="13" rx="1" fill="none" stroke="#5a5a5a" stroke-width="1.8"/><circle cx="8" cy="7.5" r="3" fill="none" stroke="#5a5a5a" stroke-width="1.4"/><path d="M8 8 L11 11.5" stroke="#5a5a5a" stroke-width="1.5"/></svg><div class="t" style="left:37.5px;top:429.5px;font-size:26px;color:#555555;font-weight:normal;font-family:'Liberation Sans',sans-serif;letter-spacing:0.25px">21 GB Volume</div><svg class="abs" style="left:11px;top:465.0px" width="16" height="16" viewBox="0 0 16 16"><rect x="2" y="1.5" width="12.5" height="13" rx="1" fill="none" stroke="#5a5a5a" stroke-width="1.8"/><circle cx="8" cy="7.5" r="3" fill="none" stroke="#5a5a5a" stroke-width="1.4"/><path d="M8 8 L11 11.5" stroke="#5a5a5a" stroke-width="1.5"/></svg><div class="t" style="left:37.5px;top:460.5px;font-size:26px;color:#555555;font-weight:normal;font-family:'Liberation Sans',sans-serif;letter-spacing:0.25px">32 GB Volume</div><svg class="abs" style="left:11px;top:495.5px" width="16" height="16" viewBox="0 0 16 16"><rect x="2" y="1.5" width="12.5" height="13" rx="1" fill="none" stroke="#5a5a5a" stroke-width="1.8"/><circle cx="8" cy="7.5" r="3" fill="none" stroke="#5a5a5a" stroke-width="1.4"/><path d="M8 8 L11 11.5" stroke="#5a5a5a" stroke-width="1.5"/></svg><div class="t" style="left:37.5px;top:491.0px;font-size:26px;color:#555555;font-weight:normal;font-family:'Liberation Sans',sans-serif;letter-spacing:0.25px">Computer</div><svg class="abs" style="left:11px;top:536.5px" width="16" height="16" viewBox="0 0 16 16"><path d="M1 3 H6.5 L8 5 H15 V14 H1 Z" fill="#5a5a5a"/><rect x="2" y="5.5" width="12" height="1.2" fill="#f2f1f0"/></svg><div class="t" style="left:37.5px;top:532.0px;font-size:26px;color:#555555;font-weight:normal;font-family:'Liberation Sans',sans-serif;letter-spacing:0.25px">workbench</div><svg class="abs" style="left:11px;top:577.9px" width="16" height="16" viewBox="0 0 16 16"><rect x="4" y="1.5" width="8" height="10" fill="none" stroke="#5a5a5a" stroke-width="1.7"/><rect x="6" y="3.5" width="4" height="1.2" fill="#5a5a5a"/><path d="M1 14.5 H15 M8 11.5 V14.5" stroke="#5a5a5a" stroke-width="1.7"/></svg><div class="t" style="left:37.5px;top:573.4px;font-size:26px;color:#555555;font-weight:normal;font-family:'Liberation Sans',sans-serif;letter-spacing:0.25px">Connect to Server</div><div class="abs" style="left:373.0px;top:118px;width:46px;height:38px"><svg width="46" height="38" viewBox="0 0 46 38"><defs>
<radialGradient id="dg" cx="0.66" cy="0.62" r="0.75"><stop offset="0" stop-color="#da8ad0"/><stop offset="0.35" stop-color="#bf58bb"/><stop offset="0.8" stop-color="#9a3aa2"/><stop offset="1" stop-color="#6a2378"/></radialGradient></defs>
<rect x="0.5" y="0.5" width="45" height="37" rx="3" fill="url(#dg)" stroke="#5a1f55" stroke-width="1"/>
<path d="M0.5 6.5 V3.5 Q0.5 0.5 3.5 0.5 H42.5 Q45.5 0.5 45.5 3.5 V6.5 Z" fill="#eef0d6" stroke="#8a8a7a" stroke-width="1"/>
<rect x="4" y="10" width="6" height="8" fill="#fbeffc"/><rect x="4" y="21" width="6" height="8" fill="#fbeffc"/>
</svg></div><div class="t" style="left:311.5px;width:170px;text-align:center;top:162.0px;font-size:26px;color:#3c3c3c;font-weight:normal;letter-spacing:1px">Desktop</div><div class="abs" style="left:528.0px;top:118px;width:46px;height:38px"><svg width="46" height="38" viewBox="0 0 46 38"><defs>
<radialGradient id="fg" cx="0.3" cy="0.25" r="0.9"><stop offset="0" stop-color="#f4c98a"/><stop offset="0.45" stop-color="#ec9a4e"/><stop offset="1" stop-color="#e04f1c"/></radialGradient></defs>
<path d="M1.3 10 V1.8 Q1.3 1 2.2 1 H19.8 L22.3 4.3 H43.8 Q44.7 4.3 44.7 5.2 V10 Z" fill="#f6f6f6" stroke="#9d9d9d" stroke-width="0.8"/>
<rect x="4" y="2.6" width="12.5" height="1.6" fill="#e08050"/>
<rect x="0" y="9" width="46" height="29" rx="1.6" fill="url(#fg)"/>
<rect x="0" y="9" width="46" height="1" fill="#c98a5a" opacity=".8"/>
<rect x="0.5" y="37" width="45" height="1" fill="#9b3a12" opacity=".7"/>
</svg></div><div class="t" style="left:466.5px;width:170px;text-align:center;top:162.0px;font-size:26px;color:#3c3c3c;font-weight:normal;letter-spacing:1px">Developm</div><div class="t" style="left:466.5px;width:170px;text-align:center;top:190.0px;font-size:26px;color:#3c3c3c;font-weight:normal;letter-spacing:1px">ent</div><div class="abs" style="left:683.0px;top:118px;width:46px;height:38px"><svg width="46" height="38" viewBox="0 0 46 38"><defs>
<radialGradient id="fg" cx="0.3" cy="0.25" r="0.9"><stop offset="0" stop-color="#f4c98a"/><stop offset="0.45" stop-color="#ec9a4e"/><stop offset="1" stop-color="#e04f1c"/></radialGradient></defs>
<path d="M1.3 10 V1.8 Q1.3 1 2.2 1 H19.8 L22.3 4.3 H43.8 Q44.7 4.3 44.7 5.2 V10 Z" fill="#f6f6f6" stroke="#9d9d9d" stroke-width="0.8"/>
<rect x="4" y="2.6" width="12.5" height="1.6" fill="#e08050"/>
<rect x="0" y="9" width="46" height="29" rx="1.6" fill="url(#fg)"/>
<rect x="0" y="9" width="46" height="1" fill="#c98a5a" opacity=".8"/>
<rect x="0.5" y="37" width="45" height="1" fill="#9b3a12" opacity=".7"/>
<path d="M21 12 H40 L44 16 V38 H21 Z" fill="#f2f2f2" stroke="#aaa" stroke-width=".8"/><path d="M24 18 H40" stroke="#999" stroke-width=".8"/><path d="M24 21 H40" stroke="#999" stroke-width=".8"/><path d="M24 24 H40" stroke="#999" stroke-width=".8"/><path d="M24 27 H40" stroke="#999" stroke-width=".8"/><path d="M24 30 H40" stroke="#999" stroke-width=".8"/><path d="M24 33 H40" stroke="#999" stroke-width=".8"/></svg></div><div class="t" style="left:621.5px;width:170px;text-align:center;top:162.0px;font-size:26px;color:#3c3c3c;font-weight:normal;letter-spacing:1px">Documents</div><div class="abs" style="left:838.0px;top:118px;width:46px;height:38px"><svg width="46" height="38" viewBox="0 0 46 38"><defs>
<radialGradient id="fg" cx="0.3" cy="0.25" r="0.9"><stop offset="0" stop-color="#f4c98a"/><stop offset="0.45" stop-color="#ec9a4e"/><stop offset="1" stop-color="#e04f1c"/></radialGradient></defs>
<path d="M1.3 10 V1.8 Q1.3 1 2.2 1 H19.8 L22.3 4.3 H43.8 Q44.7 4.3 44.7 5.2 V10 Z" fill="#f6f6f6" stroke="#9d9d9d" stroke-width="0.8"/>
<rect x="4" y="2.6" width="12.5" height="1.6" fill="#e08050"/>
<rect x="0" y="9" width="46" height="29" rx="1.6" fill="url(#fg)"/>
<rect x="0" y="9" width="46" height="1" fill="#c98a5a" opacity=".8"/>
<rect x="0.5" y="37" width="45" height="1" fill="#9b3a12" opacity=".7"/>
<path d="M26 11 H35 V23 H41 L30.5 36 L20 23 H26 Z" fill="#e4e4e4" stroke="#bbb" stroke-width=".8"/></svg></div><div class="t" style="left:776.5px;width:170px;text-align:center;top:162.0px;font-size:26px;color:#3c3c3c;font-weight:normal;letter-spacing:1px">Downloads</div><div class="abs" style="left:993.0px;top:118px;width:46px;height:38px"><svg width="46" height="38" viewBox="0 0 46 38"><defs>
<radialGradient id="fg" cx="0.3" cy="0.25" r="0.9"><stop offset="0" stop-color="#f4c98a"/><stop offset="0.45" stop-color="#ec9a4e"/><stop offset="1" stop-color="#e04f1c"/></radialGradient></defs>
<path d="M1.3 10 V1.8 Q1.3 1 2.2 1 H19.8 L22.3 4.3 H43.8 Q44.7 4.3 44.7 5.2 V10 Z" fill="#f6f6f6" stroke="#9d9d9d" stroke-width="0.8"/>
<rect x="4" y="2.6" width="12.5" height="1.6" fill="#e08050"/>
<rect x="0" y="9" width="46" height="29" rx="1.6" fill="url(#fg)"/>
<rect x="0" y="9" width="46" height="1" fill="#c98a5a" opacity=".8"/>
<rect x="0.5" y="37" width="45" height="1" fill="#9b3a12" opacity=".7"/>
<path d="M21 31 V15 L37 10 V27" fill="none" stroke="#4a4a4a" stroke-width="3"/><ellipse cx="18" cy="32" rx="4.5" ry="3.5" fill="#5a5a5a"/><ellipse cx="34" cy="28" rx="4.5" ry="3.5" fill="#5a5a5a"/><path d="M21 15 L37 10 V14 L21 19Z" fill="#4a4a4a"/></svg></div><div class="t" style="left:931.5px;width:170px;text-align:center;top:162.0px;font-size:26px;color:#3c3c3c;font-weight:normal;letter-spacing:1px">Music</div><div class="abs" style="left:373.0px;top:236px;width:46px;height:38px"><svg width="46" height="38" viewBox="0 0 46 38"><defs>
<radialGradient id="fg" cx="0.3" cy="0.25" r="0.9"><stop offset="0" stop-color="#f4c98a"/><stop offset="0.45" stop-color="#ec9a4e"/><stop offset="1" stop-color="#e04f1c"/></radialGradient></defs>
<path d="M1.3 10 V1.8 Q1.3 1 2.2 1 H19.8 L22.3 4.3 H43.8 Q44.7 4.3 44.7 5.2 V10 Z" fill="#f6f6f6" stroke="#9d9d9d" stroke-width="0.8"/>
<rect x="4" y="2.6" width="12.5" height="1.6" fill="#e08050"/>
<rect x="0" y="9" width="46" height="29" rx="1.6" fill="url(#fg)"/>
<rect x="0" y="9" width="46" height="1" fill="#c98a5a" opacity=".8"/>
<rect x="0.5" y="37" width="45" height="1" fill="#9b3a12" opacity=".7"/>
<path d="M16 22 L30 14 L37 26 L23 34Z" fill="#4a4560" stroke="#eee" stroke-width="1.5"/><rect x="22.5" y="19.5" width="19" height="19" fill="#f8f8f8" stroke="#bbb" stroke-width=".6"/><rect x="24.5" y="21.5" width="15" height="14.5" fill="#3e3a55"/></svg></div><div class="t" style="left:311.5px;width:170px;text-align:center;top:280.0px;font-size:26px;color:#3c3c3c;font-weight:normal;letter-spacing:1px">Pictures</div><div class="abs" style="left:528.0px;top:236px;width:46px;height:38px"><svg width="46" height="38" viewBox="0 0 46 38"><defs>
<radialGradient id="fg" cx="0.3" cy="0.25" r="0.9"><stop offset="0" stop-color="#f4c98a"/><stop offset="0.45" stop-color="#ec9a4e"/><stop offset="1" stop-color="#e04f1c"/></radialGradient></defs>
<path d="M1.3 10 V1.8 Q1.3 1 2.2 1 H19.8 L22.3 4.3 H43.8 Q44.7 4.3 44.7 5.2 V10 Z" fill="#f6f6f6" stroke="#9d9d9d" stroke-width="0.8"/>
<rect x="4" y="2.6" width="12.5" height="1.6" fill="#e08050"/>
<rect x="0" y="9" width="46" height="29" rx="1.6" fill="url(#fg)"/>
<rect x="0" y="9" width="46" height="1" fill="#c98a5a" opacity=".8"/>
<rect x="0.5" y="37" width="45" height="1" fill="#9b3a12" opacity=".7"/>
<circle cx="32" cy="18" r="4.5" fill="#e0e0e0"/><path d="M31 20 L33 20 L33.5 27 L30.5 27Z" fill="#d4d4d4"/><path d="M20 38 Q21 28 32 27 Q43 28 44 38Z" fill="#e6e6e6"/></svg></div><div class="t" style="left:466.5px;width:170px;text-align:center;top:280.0px;font-size:26px;color:#3c3c3c;font-weight:normal;letter-spacing:1px">Public</div><div class="abs" style="left:683.0px;top:236px;width:46px;height:38px"><svg width="46" height="38" viewBox="0 0 46 38"><defs>
<radialGradient id="fg" cx="0.3" cy="0.25" r="0.9"><stop offset="0" stop-color="#f4c98a"/><stop offset="0.45" stop-color="#ec9a4e"/><stop offset="1" stop-color="#e04f1c"/></radialGradient></defs>
<path d="M1.3 10 V1.8 Q1.3 1 2.2 1 H19.8 L22.3 4.3 H43.8 Q44.7 4.3 44.7 5.2 V10 Z" fill="#f6f6f6" stroke="#9d9d9d" stroke-width="0.8"/>
<rect x="4" y="2.6" width="12.5" height="1.6" fill="#e08050"/>
<rect x="0" y="9" width="46" height="29" rx="1.6" fill="url(#fg)"/>
<rect x="0" y="9" width="46" height="1" fill="#c98a5a" opacity=".8"/>
<rect x="0.5" y="37" width="45" height="1" fill="#9b3a12" opacity=".7"/>
</svg></div><div class="t" style="left:621.5px;width:170px;text-align:center;top:280.0px;font-size:26px;color:#3c3c3c;font-weight:normal;letter-spacing:1px">repositorie</div><div class="t" style="left:621.5px;width:170px;text-align:center;top:308.0px;font-size:26px;color:#3c3c3c;font-weight:normal;letter-spacing:1px">s</div><div class="abs" style="left:838.0px;top:236px;width:46px;height:38px"><svg width="46" height="38" viewBox="0 0 46 38"><defs>
<radialGradient id="fg" cx="0.3" cy="0.25" r="0.9"><stop offset="0" stop-color="#f4c98a"/><stop offset="0.45" stop-color="#ec9a4e"/><stop offset="1" stop-color="#e04f1c"/></radialGradient></defs>
<path d="M1.3 10 V1.8 Q1.3 1 2.2 1 H19.8 L22.3 4.3 H43.8 Q44.7 4.3 44.7 5.2 V10 Z" fill="#f6f6f6" stroke="#9d9d9d" stroke-width="0.8"/>
<rect x="4" y="2.6" width="12.5" height="1.6" fill="#e08050"/>
<rect x="0" y="9" width="46" height="29" rx="1.6" fill="url(#fg)"/>
<rect x="0" y="9" width="46" height="1" fill="#c98a5a" opacity=".8"/>
<rect x="0.5" y="37" width="45" height="1" fill="#9b3a12" opacity=".7"/>
<path d="M20 13 H38 L42 17 V38 H20 Z" fill="#e8e8e8" stroke="#aaa" stroke-width=".8"/><text x="26" y="31" font-size="14" fill="#9a9a9a" font-family="Liberation Sans">a</text><path d="M20 24 L34 38" stroke="#999" stroke-width="1"/></svg></div><div class="t" style="left:776.5px;width:170px;text-align:center;top:280.0px;font-size:26px;color:#3c3c3c;font-weight:normal;letter-spacing:1px">Templates</div><div class="abs" style="left:993.0px;top:236px;width:46px;height:38px"><svg width="46" height="38" viewBox="0 0 46 38"><defs>
<radialGradient id="fg" cx="0.3" cy="0.25" r="0.9"><stop offset="0" stop-color="#f4c98a"/><stop offset="0.45" stop-color="#ec9a4e"/><stop offset="1" stop-color="#e04f1c"/></radialGradient></defs>
<path d="M1.3 10 V1.8 Q1.3 1 2.2 1 H19.8 L22.3 4.3 H43.8 Q44.7 4.3 44.7 5.2 V10 Z" fill="#f6f6f6" stroke="#9d9d9d" stroke-width="0.8"/>
<rect x="4" y="2.6" width="12.5" height="1.6" fill="#e08050"/>
<rect x="0" y="9" width="46" height="29" rx="1.6" fill="url(#fg)"/>
<rect x="0" y="9" width="46" height="1" fill="#c98a5a" opacity=".8"/>
<rect x="0.5" y="37" width="45" height="1" fill="#9b3a12" opacity=".7"/>
</svg></div><div class="t" style="left:931.5px;width:170px;text-align:center;top:280.0px;font-size:26px;color:#3c3c3c;font-weight:normal;letter-spacing:1px">testing</div><div class="abs" style="left:373.0px;top:354px;width:46px;height:38px"><svg width="46" height="38" viewBox="0 0 46 38"><defs>
<radialGradient id="fg" cx="0.3" cy="0.25" r="0.9"><stop offset="0" stop-color="#f4c98a"/><stop offset="0.45" stop-color="#ec9a4e"/><stop offset="1" stop-color="#e04f1c"/></radialGradient></defs>
<path d="M1.3 10 V1.8 Q1.3 1 2.2 1 H19.8 L22.3 4.3 H43.8 Q44.7 4.3 44.7 5.2 V10 Z" fill="#f6f6f6" stroke="#9d9d9d" stroke-width="0.8"/>
<rect x="4" y="2.6" width="12.5" height="1.6" fill="#e08050"/>
<rect x="0" y="9" width="46" height="29" rx="1.6" fill="url(#fg)"/>
<rect x="0" y="9" width="46" height="1" fill="#c98a5a" opacity=".8"/>
<rect x="0.5" y="37" width="45" height="1" fill="#9b3a12" opacity=".7"/>
<rect x="22" y="13" width="22" height="25" fill="#3a3035"/><rect x="25.5" y="15" width="15" height="10" fill="#9a6aa8"/><rect x="25.5" y="27" width="15" height="9.5" fill="#8a5a98"/><rect x="22.8" y="14" width="1.6" height="1.6" fill="#ddd"/><rect x="41.6" y="14" width="1.6" height="1.6" fill="#ddd"/><rect x="22.8" y="17" width="1.6" height="1.6" fill="#ddd"/><rect x="41.6" y="17" width="1.6" height="1.6" fill="#ddd"/><rect x="22.8" y="20" width="1.6" height="1.6" fill="#ddd"/><rect x="41.6" y="20" width="1.6" height="1.6" fill="#ddd"/><rect x="22.8" y="23" width="1.6" height="1.6" fill="#ddd"/><rect x="41.6" y="23" width="1.6" height="1.6" fill="#ddd"/><rect x="22.8" y="26" width="1.6" height="1.6" fill="#ddd"/><rect x="41.6" y="26" width="1.6" height="1.6" fill="#ddd"/><rect x="22.8" y="29" width="1.6" height="1.6" fill="#ddd"/><rect x="41.6" y="29" width="1.6" height="1.6" fill="#ddd"/><rect x="22.8" y="32" width="1.6" height="1.6" fill="#ddd"/><rect x="41.6" y="32" width="1.6" height="1.6" fill="#ddd"/><rect x="22.8" y="35" width="1.6" height="1.6" fill="#ddd"/><rect x="41.6" y="35" width="1.6" height="1.6" fill="#ddd"/></svg></div><div class="t" style="left:311.5px;width:170px;text-align:center;top:397.5px;font-size:26px;color:#3c3c3c;font-weight:normal;letter-spacing:1px">Videos</div><div class="abs" style="left:528.0px;top:354px;width:46px;height:38px"><svg width="46" height="38" viewBox="0 0 46 38"><defs>
<radialGradient id="fg" cx="0.3" cy="0.25" r="0.9"><stop offset="0" stop-color="#f4c98a"/><stop offset="0.45" stop-color="#ec9a4e"/><stop offset="1" stop-color="#e04f1c"/></radialGradient></defs>
<path d="M1.3 10 V1.8 Q1.3 1 2.2 1 H19.8 L22.3 4.3 H43.8 Q44.7 4.3 44.7 5.2 V10 Z" fill="#f6f6f6" stroke="#9d9d9d" stroke-width="0.8"/>
<rect x="4" y="2.6" width="12.5" height="1.6" fill="#e08050"/>
<rect x="0" y="9" width="46" height="29" rx="1.6" fill="url(#fg)"/>
<rect x="0" y="9" width="46" height="1" fill="#c98a5a" opacity=".8"/>
<rect x="0.5" y="37" width="45" height="1" fill="#9b3a12" opacity=".7"/>
<rect x="31" y="26" width="12" height="11" fill="#222"/><path d="M25 34 Q27 28 35 28 L35 26 L39 30 L35 34 V32 Q29 31 25 34Z" fill="#f5f5f5"/></svg></div><div class="t" style="left:466.5px;width:170px;text-align:center;top:397.5px;font-size:26px;color:#3c3c3c;font-weight:normal;letter-spacing:1px">Examples</div><div class="abs" style="left:688.0px;top:347px;width:36px;height:45px"><svg width="36" height="45" viewBox="0 0 36 45">
<path d="M0.5 0.5 H27 L35.5 9 V44.5 H0.5 Z" fill="#f0f0f0" stroke="#b4b4b4" stroke-width="1"/>
<path d="M27 0.5 V9 H35.5" fill="#dcdcdc" stroke="#b4b4b4" stroke-width="1"/>
<g stroke="#bdbdbd" stroke-width=".8"><path d="M5 8 H24"/><path d="M5 11 H30"/><path d="M5 14 H30"/><path d="M5 17 H24"/><path d="M5 20 H30"/><path d="M5 23 H30"/><path d="M5 26 H24"/><path d="M5 29 H30"/><path d="M5 32 H30"/><path d="M5 35 H24"/><path d="M5 38 H30"/><path d="M5 41 H30"/></g></svg></div><div class="t" style="left:621.5px;width:170px;text-align:center;top:397.5px;font-size:26px;color:#3c3c3c;font-weight:normal;letter-spacing:1px">jochem.</div><div class="t" style="left:621.5px;width:170px;text-align:center;top:425.5px;font-size:26px;color:#3c3c3c;font-weight:normal;letter-spacing:1px">pub</div><div class="abs" style="left:843.0px;top:347px;width:36px;height:45px"><svg width="36" height="45" viewBox="0 0 36 45">
<path d="M0.5 0.5 H27 L35.5 9 V44.5 H0.5 Z" fill="#f0f0f0" stroke="#b4b4b4" stroke-width="1"/>
<path d="M27 0.5 V9 H35.5" fill="#dcdcdc" stroke="#b4b4b4" stroke-width="1"/>
<g stroke="#bdbdbd" stroke-width=".8"><path d="M5 8 H24"/><path d="M5 11 H30"/><path d="M5 14 H30"/><path d="M5 17 H24"/><path d="M5 20 H30"/><path d="M5 23 H30"/><path d="M5 26 H24"/><path d="M5 29 H30"/><path d="M5 32 H30"/><path d="M5 35 H24"/><path d="M5 38 H30"/><path d="M5 41 H30"/></g><rect x="22" y="28" width="14" height="15" rx="2" fill="#eee" stroke="#bbb"/><path d="M25.5 34 V31.5 Q29 27 32.5 31.5 V34" fill="none" stroke="#999" stroke-width="1.6"/><rect x="24.5" y="34" width="9" height="7" fill="#9a9a9a"/></svg></div><div class="t" style="left:776.5px;width:170px;text-align:center;top:397.5px;font-size:26px;color:#3c3c3c;font-weight:normal;letter-spacing:1px">log.txt</div><div class="abs" style="left:998.0px;top:347px;width:36px;height:45px"><svg width="36" height="45" viewBox="0 0 36 45">
<path d="M0.5 0.5 H27 L35.5 9 V44.5 H0.5 Z" fill="#f0f0f0" stroke="#b4b4b4" stroke-width="1"/>
<path d="M27 0.5 V9 H35.5" fill="#dcdcdc" stroke="#b4b4b4" stroke-width="1"/>
<g stroke="#bdbdbd" stroke-width=".8"><path d="M5 8 H24"/><path d="M5 11 H30"/><path d="M5 14 H30"/><path d="M5 17 H24"/><path d="M5 20 H30"/><path d="M5 23 H30"/><path d="M5 26 H24"/><path d="M5 29 H30"/><path d="M5 32 H30"/><path d="M5 35 H24"/><path d="M5 38 H30"/><path d="M5 41 H30"/></g></svg></div><div class="t" style="left:931.5px;width:170px;text-align:center;top:397.5px;font-size:26px;color:#3c3c3c;font-weight:normal;letter-spacing:1px">projects.</div><div class="t" style="left:931.5px;width:170px;text-align:center;top:425.5px;font-size:26px;color:#3c3c3c;font-weight:normal;letter-spacing:1px">list</div></div>
<div class="win" id="term" style="left:1506px;top:622px;width:1212px;height:805px;border-radius:8px 8px 0 0;background:#300a24;box-shadow:0 10px 22px rgba(0,0,0,.55),0 4px 8px rgba(0,0,0,.35),0 0 0 1px rgba(0,0,0,.2);overflow:hidden;z-index:6"><div class="abs" style="left:0;top:0;width:100%;height:84px;background:linear-gradient(#5a5950 0px,#4a4943 25px,#3c3b37 50px,#3a3935 84px)"></div><svg class="abs" style="left:0;top:0" width="200" height="60"><defs>
<linearGradient id="tc" x1="0" y1="0" x2="0" y2="1"><stop offset="0" stop-color="#f47a4e"/><stop offset="1" stop-color="#dc4a22"/></linearGradient>
<linearGradient id="tg" x1="0" y1="0" x2="0" y2="1"><stop offset="0" stop-color="#8a8984"/><stop offset="1" stop-color="#6a6964"/></linearGradient></defs>
<circle cx="27.200000000000045" cy="25.700000000000045" r="13.3" fill="url(#tc)" stroke="#3c2a22" stroke-width="1"/>
<circle cx="60.40000000000009" cy="25.700000000000045" r="13.3" fill="url(#tg)" stroke="#33322e" stroke-width="1"/>
<circle cx="93" cy="25.700000000000045" r="13.3" fill="url(#tg)" stroke="#33322e" stroke-width="1"/>
<g stroke="#3a2a26" stroke-width="2" fill="none"><path d="M21.700000000000045 20.200000000000045 l11 11 M32.700000000000045 20.200000000000045 l-11 11"/></g>
<g stroke="#3c3b37" stroke-width="2" fill="none"><path d="M54.40000000000009 25.700000000000045 h12"/><rect x="87.5" y="20.200000000000045" width="11" height="11"/></g>
</svg><div class="t" style="left:128px;top:13.6px;font-size:26px;color:#dfdbd2;font-weight:bold;font-family:'Liberation Sans',sans-serif;">jochem@ubuntu: ~</div><div class="t" style="left:5px;top:52.0px;font-size:27.5px;color:#dfdbd2;font-weight:normal;font-family:'Liberation Sans',sans-serif;">File Edit View Search Terminal Help</div><div class="t" style="left:2px;top:88.1px;font-size:24.67px;color:#ffffff;font-weight:bold;font-family:'Liberation Mono',monospace;"><span style="color:#8ae234">jochem@ubuntu</span><span style="color:#f0f0f0">:</span><span style="color:#729fcf">~</span><span style="color:#f0f0f0">$ </span></div><div class="abs" style="left:256px;top:85px;width:15px;height:30px;background:#ffffff"></div><div class="abs" style="left:1209px;top:84px;width:3px;height:721px;background:#d66a40"></div></div>
</body></html>
